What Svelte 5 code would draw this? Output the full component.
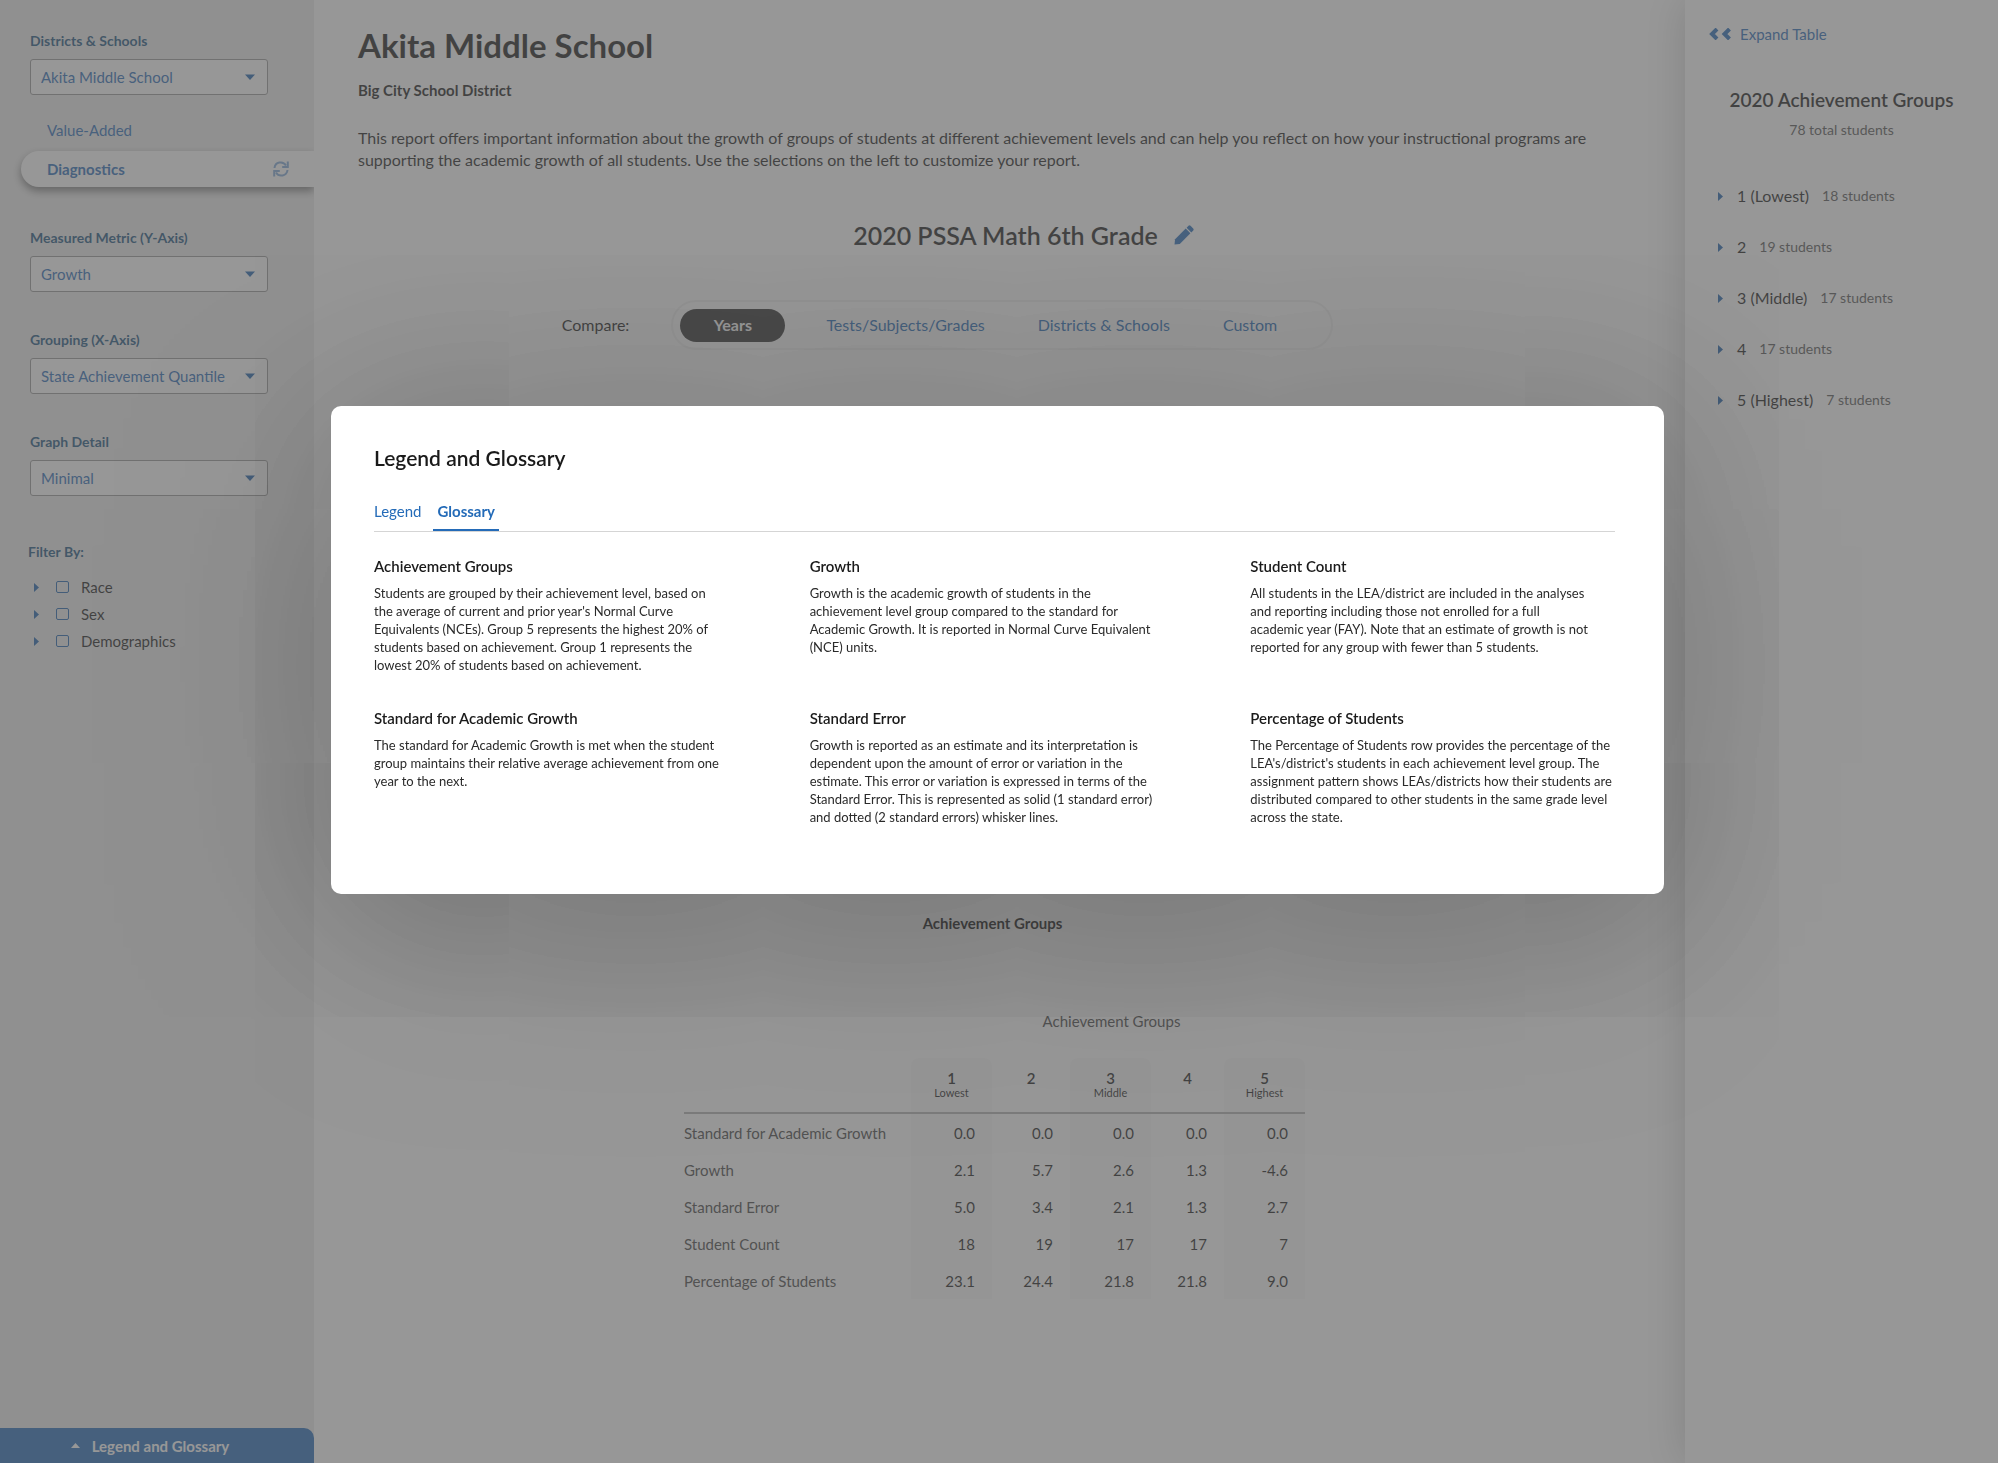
<script lang="ts">
  const selects = [
    { id: 'metric', label: 'Measured Metric (Y-Axis)', value: 'Growth' },
    { id: 'grouping', label: 'Grouping (X-Axis)', value: 'State Achievement Quantile' },
    { id: 'detail', label: 'Graph Detail', value: 'Minimal' }
  ];
  const filters = ['Race', 'Sex', 'Demographics'];
  const compare = ['Years', 'Tests/Subjects/Grades', 'Districts & Schools', 'Custom'];
  const columns = [
    { n: '1', sub: 'Lowest' },
    { n: '2', sub: '' },
    { n: '3', sub: 'Middle' },
    { n: '4', sub: '' },
    { n: '5', sub: 'Highest' }
  ];
  const rows = [
    { name: 'Standard for Academic Growth', values: ['0.0', '0.0', '0.0', '0.0', '0.0'] },
    { name: 'Growth', values: ['2.1', '5.7', '2.6', '1.3', '-4.6'] },
    { name: 'Standard Error', values: ['5.0', '3.4', '2.1', '1.3', '2.7'] },
    { name: 'Student Count', values: ['18', '19', '17', '17', '7'] },
    { name: 'Percentage of Students', values: ['23.1', '24.4', '21.8', '21.8', '9.0'] }
  ];
  const groups = [
    { name: '1 (Lowest)', count: 18 },
    { name: '2', count: 19 },
    { name: '3 (Middle)', count: 17 },
    { name: '4', count: 17 },
    { name: '5 (Highest)', count: 7 }
  ];
  const glossary = [
    {
      term: 'Achievement Groups',
      text: "Students are grouped by their achievement level, based on\nthe average of current and prior year's Normal Curve\nEquivalents (NCEs). Group 5 represents the highest 20% of\nstudents based on achievement. Group 1 represents the\nlowest 20% of students based on achievement."
    },
    {
      term: 'Growth',
      text: 'Growth is the academic growth of students in the\nachievement level group compared to the standard for\nAcademic Growth. It is reported in Normal Curve Equivalent\n(NCE) units.'
    },
    {
      term: 'Student Count',
      text: 'All students in the LEA/district are included in the analyses\nand reporting including those not enrolled for a full\nacademic year (FAY). Note that an estimate of growth is not\nreported for any group with fewer than 5 students.'
    },
    {
      term: 'Standard for Academic Growth',
      text: 'The standard for Academic Growth is met when the student\ngroup maintains their relative average achievement from one\nyear to the next.'
    },
    {
      term: 'Standard Error',
      text: 'Growth is reported as an estimate and its interpretation is\ndependent upon the amount of error or variation in the\nestimate. This error or variation is expressed in terms of the\nStandard Error. This is represented as solid (1 standard error)\nand dotted (2 standard errors) whisker lines.'
    },
    {
      term: 'Percentage of Students',
      text: "The Percentage of Students row provides the percentage of the\nLEA's/district's students in each achievement level group. The\nassignment pattern shows LEAs/districts how their students are\ndistributed compared to other students in the same grade level\nacross the state."
    }
  ];
</script>

{#snippet dropdown(id, label, value)}
  <div class="field">
    <label for={id}>{label}</label>
    <div class="select">
      <select {id}><option>{value}</option></select>
      <svg class="down" viewBox="0 0 10 6" aria-hidden="true"><path d="M0 0.5h10L5 6z" /></svg>
    </div>
  </div>
{/snippet}

{#snippet caret()}
  <svg class="caret" viewBox="0 0 5 9" aria-hidden="true"><path d="M0 0l5 4.5L0 9z" /></svg>
{/snippet}

<div class="page">
  <aside class="sidebar">
    {@render dropdown('school', 'Districts & Schools', 'Akita Middle School')}
    <nav>
      <a href="#value-added">Value-Added</a>
      <a href="#diagnostics" class="current">
        Diagnostics
        <svg class="sync" viewBox="0 0 16 16" aria-hidden="true">
          <path d="M1.5 7A6.2 6.2 0 0 1 13 4.5M14.5 9A6.2 6.2 0 0 1 3 11.5" />
          <path d="M14.8 0.5v5.5H9.2M1.2 15.5V10h5.6" />
        </svg>
      </a>
    </nav>
    <div class="fields">
      {#each selects as s}
        {@render dropdown(s.id, s.label, s.value)}
      {/each}
    </div>
    <fieldset>
      <legend>Filter By:</legend>
      {#each filters as f}
        <label class="check">{@render caret()}<input type="checkbox" />{f}</label>
      {/each}
    </fieldset>
    <button class="glossary-bar">
      <svg viewBox="0 0 9 5" aria-hidden="true"><path d="M0 5l4.5-5L9 5z" /></svg>
      Legend and Glossary
    </button>
  </aside>

  <main>
    <h1>Akita Middle School</h1>
    <p class="district">Big City School District</p>
    <p class="intro">
      This report offers important information about the growth of groups of students at different achievement levels and can help you reflect on how your instructional programs are supporting the academic growth of all students. Use the selections on the left to customize your report.
    </p>
    <div class="title">
      <h2>2020 PSSA Math 6th Grade</h2>
      <button aria-label="Edit title">
        <svg viewBox="0 0 20 20" aria-hidden="true">
          <path d="M0.5 19.5l0.6-5.3L11.7 3.6l4.7 4.7L5.8 18.9z" />
          <path d="M12.6 2.7l1.9-1.9q1-0.9 2 0l2.7 2.7q0.9 1 0 2l-1.9 1.9z" />
        </svg>
      </button>
    </div>
    <div class="compare">
      <span>Compare:</span>
      <div class="pills">
        {#each compare as c, i}
          <button class:on={i === 0}>{c}</button>
        {/each}
      </div>
    </div>
    <div class="chart"><strong>Achievement Groups</strong></div>
    <div class="table-title">Achievement Groups</div>
    <div class="table-wrap">
      <table>
        <colgroup>
          <col class="name" />
          <col class="wide" />
          <col class="mid" />
          <col class="wide" />
          <col class="slim" />
          <col class="wide" />
        </colgroup>
        <thead>
          <tr>
            <td></td>
            {#each columns as c}
              <th scope="col">{c.n}<small>{c.sub}</small></th>
            {/each}
          </tr>
        </thead>
        <tbody>
          {#each rows as r}
            <tr>
              <th scope="row">{r.name}</th>
              {#each r.values as v}<td>{v}</td>{/each}
            </tr>
          {/each}
        </tbody>
      </table>
    </div>
  </main>

  <aside class="panel">
    <a class="expand" href="#expand">
      <svg viewBox="0 0 22 12" aria-hidden="true"><path d="M8 1L3 6l5 5M20.5 1L15.5 6l5 5" /></svg>
      Expand Table
    </a>
    <h3>2020 Achievement Groups</h3>
    <p class="total">78 total students</p>
    <ul>
      {#each groups as g}
        <li><button>{@render caret()}{g.name}<span>{g.count} students</span></button></li>
      {/each}
    </ul>
  </aside>
</div>

<div class="overlay">
  <div class="modal" role="dialog" aria-modal="true" aria-labelledby="modal-title">
    <h2 id="modal-title">Legend and Glossary</h2>
    <div class="tabs" role="tablist">
      <button role="tab" aria-selected="false">Legend</button>
      <button role="tab" aria-selected="true" class="active">Glossary</button>
    </div>
    <dl>
      {#each glossary as g}
        <div>
          <dt>{g.term}</dt>
          <dd>{g.text}</dd>
        </div>
      {/each}
    </dl>
  </div>
</div>

<style>
  :global(body) {
    font-family: Lato, "Open Sans", sans-serif;
    color: #1a1a1a;
    background: #fff;
  }
  * {
    box-sizing: border-box;
  }
  button,
  select {
    font: inherit;
    color: inherit;
    background: none;
    border: 0;
    padding: 0;
  }
  a {
    color: #2b6cb8;
    text-decoration: none;
  }
  h1,
  h2,
  h3,
  p,
  ul,
  dl,
  dd {
    margin: 0;
    padding: 0;
  }
  .page {
    display: grid;
    grid-template-columns: 314px minmax(0, 1fr) 313px;
    min-height: 100vh;
  }

  .sidebar {
    display: flex;
    flex-direction: column;
    background: #ededed;
    padding-top: 32px;
    font-size: 15px;
    line-height: 18px;
  }
  .field {
    display: flex;
    flex-direction: column;
    gap: 9px;
    padding: 0 46px 0 30px;
  }
  .field label,
  legend {
    font-size: 14px;
    font-weight: 700;
    color: #1d5480;
  }
  .select {
    position: relative;
    display: flex;
  }
  select {
    appearance: none;
    width: 100%;
    height: 36px;
    padding: 0 32px 0 10px;
    border: 1px solid #999;
    border-radius: 3px;
    background: #fff;
    color: #2b6cb8;
  }
  .down {
    position: absolute;
    right: 13px;
    top: 15px;
    width: 10px;
    height: 6px;
    fill: #1f63ad;
    pointer-events: none;
  }
  nav {
    display: flex;
    flex-direction: column;
    padding: 25px 0 0 21px;
  }
  nav a {
    display: flex;
    align-items: center;
    height: 20px;
    padding-left: 26px;
    margin-bottom: 11px;
  }
  nav .current {
    height: 36px;
    margin-bottom: 0;
    padding-right: 25px;
    justify-content: space-between;
    font-weight: 700;
    background: #fff;
    border-radius: 18px 0 0 18px;
    box-shadow: 0 4px 8px rgba(0, 0, 0, 0.5);
    clip-path: inset(-20px 0 -20px -20px);
  }
  .sync {
    width: 16px;
    height: 16px;
    fill: none;
    stroke: #7fa9d8;
    stroke-width: 2;
  }
  .fields {
    display: flex;
    flex-direction: column;
    gap: 39px;
    padding-top: 42px;
  }
  fieldset {
    display: flex;
    flex-direction: column;
    gap: 9px;
    border: 0;
    margin: 47px 0 0;
    padding: 0 28px;
  }
  legend {
    padding: 0;
    margin-bottom: 17px;
  }
  .check {
    display: flex;
    align-items: center;
    padding-left: 6px;
  }
  .check input {
    appearance: none;
    width: 13px;
    height: 12px;
    margin: 0 12px 0 17px;
    border: 1px solid #1f63ad;
    border-radius: 2px;
  }
  .caret {
    width: 5px;
    height: 9px;
    fill: #1f63ad;
  }
  .glossary-bar {
    display: flex;
    align-items: center;
    justify-content: center;
    gap: 12px;
    height: 35px;
    margin-top: auto;
    padding-right: 14px;
    color: #fff;
    font-weight: 700;
    background: #246bb8;
    border-radius: 0 10px 0 0;
  }
  .glossary-bar svg {
    width: 9px;
    height: 5px;
    fill: #fff;
  }

  main {
    padding: 23px 66px 0 44px;
    font-size: 15px;
    line-height: 20px;
  }
  h1 {
    font-size: 33px;
    line-height: 44px;
    font-weight: 700;
  }
  .district {
    margin-top: 13px;
    font-weight: 700;
  }
  .intro {
    margin-top: 27px;
    font-size: 16px;
    line-height: 22px;
  }
  .title {
    display: flex;
    justify-content: center;
    align-items: center;
    gap: 16px;
    margin-top: 48px;
    padding-left: 70px;
  }
  .title h2 {
    font-size: 25px;
    line-height: 32px;
    font-weight: 600;
  }
  .title button,
  .title svg {
    display: block;
    width: 20px;
    height: 20px;
    fill: #246bb8;
  }
  .compare {
    display: flex;
    justify-content: center;
    align-items: center;
    gap: 42px;
    margin-top: 49px;
    padding-right: 82px;
    font-size: 16px;
  }
  .pills {
    display: flex;
    align-items: center;
    gap: 53px;
    height: 50px;
    padding: 0 54px 0 7px;
    border: 2px solid #f2f2f2;
    border-radius: 25px;
    color: #246bb8;
  }
  .pills .on {
    width: 105px;
    height: 33px;
    margin-right: -12px;
    border-radius: 17px;
    background: #2e2e2e;
    color: #fff;
    font-weight: 700;
  }
  .chart {
    display: flex;
    align-items: flex-end;
    justify-content: center;
    min-height: 583px;
    padding-left: 8px;
  }
  .chart strong {
    font-weight: 700;
  }
  .table-title {
    margin: 78px 0 27px;
    padding-left: 246px;
    text-align: center;
    color: #444;
  }
  .table-wrap {
    display: flex;
    justify-content: center;
    padding-left: 12px;
  }
  table {
    width: 621px;
    table-layout: fixed;
    border-collapse: separate;
    border-spacing: 0;
  }
  .wide {
    width: 81px;
  }
  .mid {
    width: 78px;
  }
  .slim {
    width: 73px;
  }
  thead tr > * {
    height: 56px;
    padding: 10px 0 0;
    vertical-align: top;
    border-bottom: 2px solid #b4b4b4;
    font-weight: 600;
  }
  thead th:nth-child(even) {
    border-radius: 8px 8px 0 0;
  }
  thead small {
    display: block;
    font-size: 11px;
    line-height: 10px;
    font-weight: 400;
  }
  tbody th {
    height: 37px;
    padding: 0;
    text-align: left;
    font-weight: 400;
    color: #444;
  }
  tbody td {
    padding: 0 17px 0 0;
    text-align: right;
  }
  tr > :nth-child(even) {
    background: #fafafa;
  }

  .panel {
    padding: 24px 24px;
    background: #fff;
    box-shadow: 0 0 40px rgba(0, 0, 0, 0.22);
    line-height: 20px;
  }
  .expand {
    display: flex;
    align-items: center;
    gap: 9px;
    font-size: 15px;
  }
  .expand svg {
    width: 22px;
    height: 12px;
    fill: none;
    stroke: #246bb8;
    stroke-width: 4;
  }
  .panel h3 {
    margin-top: 44px;
    font-size: 19px;
    line-height: 24px;
    font-weight: 600;
    text-align: center;
    white-space: nowrap;
  }
  .total {
    margin-top: 8px;
    font-size: 14px;
    text-align: center;
    color: #555;
  }
  ul {
    display: flex;
    flex-direction: column;
    gap: 31px;
    margin-top: 46px;
    padding-left: 9px;
    list-style: none;
  }
  li button {
    display: flex;
    align-items: center;
    font-size: 16px;
  }
  li .caret {
    margin-right: 14px;
  }
  li span {
    margin-left: 13px;
    font-size: 14px;
    color: #555;
  }

  .overlay {
    position: fixed;
    inset: 0;
    display: flex;
    align-items: flex-start;
    padding: 406px 334px 0 331px;
    background: rgba(91, 91, 91, 0.63);
    overflow: hidden;
  }
  .modal {
    flex: 1;
    min-width: 0;
    padding: 38px 49px 68px 43px;
    background: #fff;
    border-radius: 10px;
    box-shadow: 0 30px 230px rgba(0, 0, 0, 0.32);
    font-size: 15px;
    line-height: 20px;
  }
  .modal h2 {
    font-size: 21px;
    line-height: 28px;
    font-weight: 600;
  }
  .tabs {
    display: flex;
    gap: 12px;
    margin-top: 29px;
    border-bottom: 1px solid #d5d5d5;
    color: #246bb8;
  }
  .tabs button {
    height: 30px;
    padding-bottom: 10px;
    border-bottom: 2px solid transparent;
  }
  .tabs .active {
    padding: 0 4px 10px;
    border-color: #246bb8;
    font-weight: 700;
  }
  dl {
    display: grid;
    grid-template-columns: 436fr 441fr 389fr;
    row-gap: 34px;
    margin: 24px -24px 0 0;
  }
  dt {
    font-weight: 600;
  }
  dd {
    margin-top: 8px;
    font-size: 13px;
    line-height: 18px;
    white-space: pre-line;
    color: #2a2a2a;
  }
</style>
